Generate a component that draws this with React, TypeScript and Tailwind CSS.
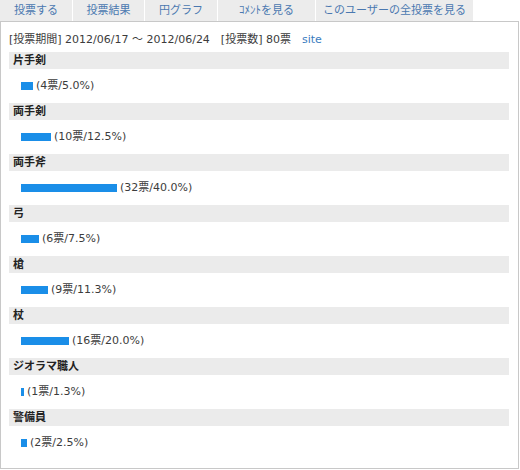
import React from "react";

const tabs = [
  { label: "投票する", w: "w-[73px]" },
  { label: "投票結果", w: "w-[72px]" },
  { label: "円グラフ", w: "w-[73px]" },
  { label: "ｺﾒﾝﾄを見る", w: "w-[98px]" },
  { label: "このユーザーの全投票を見る", w: "w-[158px]" },
];

const items = [
  { name: "片手剣", votes: 4, pct: 5.0 },
  { name: "両手剣", votes: 10, pct: 12.5 },
  { name: "両手斧", votes: 32, pct: 40.0 },
  { name: "弓", votes: 6, pct: 7.5 },
  { name: "槍", votes: 9, pct: 11.3 },
  { name: "杖", votes: 16, pct: 20.0 },
  { name: "ジオラマ職人", votes: 1, pct: 1.3 },
  { name: "警備員", votes: 2, pct: 2.5 },
];

export default function App() {
  return (
    <div
      className="w-[520px] h-[470px] bg-white text-[11px] text-[#3c3c3c]"
      style={{ fontFamily: '"DejaVu Sans", "Noto Sans CJK JP", sans-serif' }}
    >
      <div className="flex h-[21px]">
        {tabs.map((t) => (
          <div
            key={t.label}
            className={`${t.w} bg-[#ececec] border-r border-white text-[#4a78b0] flex items-center justify-center leading-none`}
          >
            {t.label}
          </div>
        ))}
      </div>
      <div className="w-[519px] h-[448px] border border-[#c8c8c8] px-[8px]">
        <div className="mt-[10px] mb-[4px] h-[16px] leading-[16px] whitespace-pre">
          {"[投票期間] 2012/06/17 ～ 2012/06/24　[投票数] 80票　"}
          <span className="text-[#3a7cc0]">site</span>
        </div>
        {items.map((it) => (
          <div key={it.name}>
            <div className="h-[17px] bg-[#ebebeb] font-bold pl-[4px] leading-[17px] mr-[1px] text-[#222]">{it.name}</div>
            <div className="py-[9px] pl-[12px] h-[34px] flex items-center">
              <div className="h-[8px] bg-[#1a8ee8]" style={{ width: Math.round(it.pct * 2.4) }} />
              <span className="ml-[3px] leading-[16px]">
                ({it.votes}票/{it.pct.toFixed(1)}%)
              </span>
            </div>
          </div>
        ))}
      </div>
    </div>
  );
}
